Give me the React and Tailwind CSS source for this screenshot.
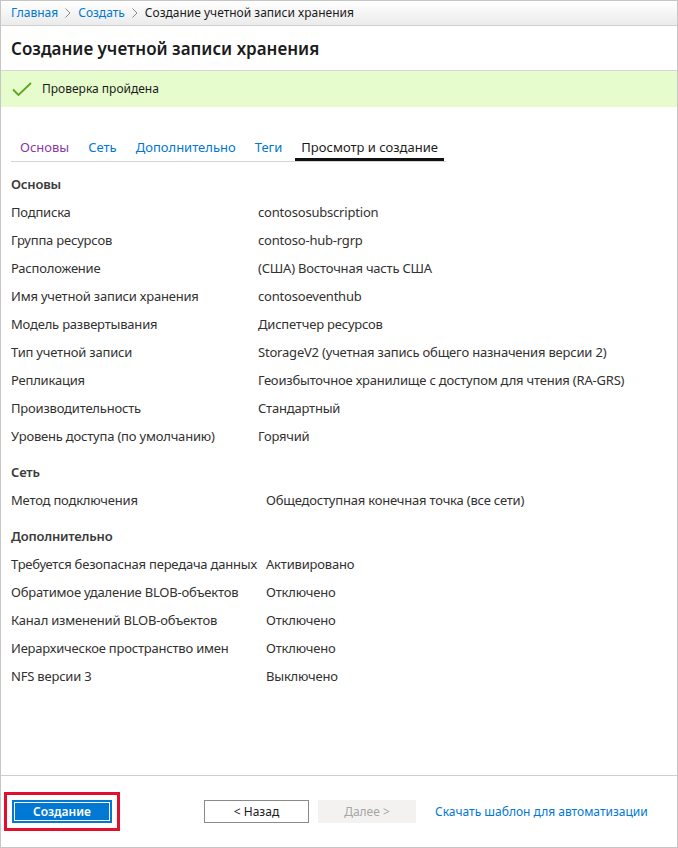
import React from "react";

const F = { fontFamily: '"Noto Sans", "Open Sans", sans-serif' };

const sections = [
  {
    title: "Основы",
    labelW: "w-[247px]",
    rows: [
      ["Подписка", "contososubscription"],
      ["Группа ресурсов", "contoso-hub-rgrp"],
      ["Расположение", "(США) Восточная часть США"],
      ["Имя учетной записи хранения", "contosoeventhub"],
      ["Модель развертывания", "Диспетчер ресурсов"],
      ["Тип учетной записи", "StorageV2 (учетная запись общего назначения версии 2)"],
      ["Репликация", "Геоизбыточное хранилище с доступом для чтения (RA-GRS)"],
      ["Производительность", "Стандартный"],
      ["Уровень доступа (по умолчанию)", "Горячий"],
    ],
  },
  {
    title: "Сеть",
    labelW: "w-[255px]",
    rows: [["Метод подключения", "Общедоступная конечная точка (все сети)"]],
  },
  {
    title: "Дополнительно",
    labelW: "w-[255px]",
    rows: [
      ["Требуется безопасная передача данных", "Активировано"],
      ["Обратимое удаление BLOB-объектов", "Отключено"],
      ["Канал изменений BLOB-объектов", "Отключено"],
      ["Иерархическое пространство имен", "Отключено"],
      ["NFS версии 3", "Выключено"],
    ],
  },
];

function Chevron() {
  return (
    <svg width="8" height="12" viewBox="0 0 8 12" className="mx-[6px]">
      <path d="M1.5 1.5 L6 6 L1.5 10.5" fill="none" stroke="#8a8a8a" strokeWidth="1" />
    </svg>
  );
}

export default function App() {
  return (
    <div style={F} className="w-[678px] h-[848px] flex flex-col border border-[#c6c6c6] bg-white text-[#323130] overflow-hidden">
      {/* breadcrumb */}
      <div className="h-[25px] shrink-0 flex items-center pl-[10px] text-[12px] border-b border-[#d0d0d0] bg-gradient-to-b from-white to-[#ebebeb]">
        <span className="text-[#0078d4]">Главная</span>
        <Chevron />
        <span className="text-[#0078d4]">Создать</span>
        <Chevron />
        <span className="text-[#1b1b1b]">Создание учетной записи хранения</span>
      </div>
      {/* title */}
      <div className="h-[45px] shrink-0 flex items-center pl-[10px] border-b border-[#d6d6d6]">
        <h1 className="text-[17px] font-semibold text-[#1b1b1b] leading-none">
          Создание учетной записи хранения
        </h1>
      </div>
      {/* success */}
      <div className="h-[36px] shrink-0 flex items-center bg-[#e6fccc] pl-[11px]">
        <svg width="20" height="15" viewBox="0 0 20 15">
          <path d="M1 7.5 L6.5 13 L19 1" fill="none" stroke="#5ca51f" strokeWidth="1.8" />
        </svg>
        <span className="ml-[10px] text-[12px] text-[#1b1b1b]">Проверка пройдена</span>
      </div>
      {/* content */}
      <div className="flex-1 px-[10px] pt-[27px]">
        <div className="flex gap-[7px] pl-[3px] border-b border-[#d4d4d4] w-[435px] text-[13px]">
          <div className="px-[6px] h-[27px] flex items-center text-[#8a3aa8]">Основы</div>
          <div className="px-[6px] h-[27px] flex items-center text-[#0078d4]">Сеть</div>
          <div className="px-[6px] h-[27px] flex items-center text-[#0078d4]">Дополнительно</div>
          <div className="px-[6px] h-[27px] flex items-center text-[#0078d4]">Теги</div>
          <div className="px-[6px] h-[27px] flex items-center text-[#1b1b1b] border-b-[3px] border-[#111] -mb-px pt-[3px]">
            Просмотр и создание
          </div>
        </div>
        <div className="pt-[9px] text-[13px] tracking-[-0.2px]">
          {sections.map((s, i) => (
            <div key={s.title} className={i > 0 ? "mt-[8px]" : ""}>
              <div className="h-[28px] flex items-center font-semibold text-[#3b3b3b]">{s.title}</div>
              {s.rows.map(([l, v]) => (
                <div key={l} className="h-[28px] flex items-center">
                  <div className={`${s.labelW} shrink-0 whitespace-nowrap`}>{l}</div>
                  <div className="whitespace-nowrap">{v}</div>
                </div>
              ))}
            </div>
          ))}
        </div>
      </div>
      {/* footer */}
      <div className="h-[72px] shrink-0 border-t border-[#cfcfcf] flex items-start pt-[16px] pl-[3px]">
        <div className="border-[3px] border-[#e3102d] p-[5px]">
          <div className="w-[100px] h-[23px] bg-[#0078d4] p-[2px]">
            <div className="w-full h-full border border-white flex items-center justify-center text-white text-[12px] font-semibold">
              Создание
            </div>
          </div>
        </div>
        <div className="ml-[84px] mt-[8px] w-[105px] h-[23px] border border-[#8a8a8a] flex items-center justify-center text-[12px] text-[#1b1b1b]">
          &lt; Назад
        </div>
        <div className="ml-[9px] mt-[8px] w-[98px] h-[23px] bg-[#f3f2f1] flex items-center justify-center text-[12px] text-[#a6a6a6]">
          Далее &gt;
        </div>
        <div className="ml-[19px] mt-[8px] h-[23px] flex items-center text-[12px] text-[#0078d4]">
          Скачать шаблон для автоматизации
        </div>
      </div>
    </div>
  );
}
